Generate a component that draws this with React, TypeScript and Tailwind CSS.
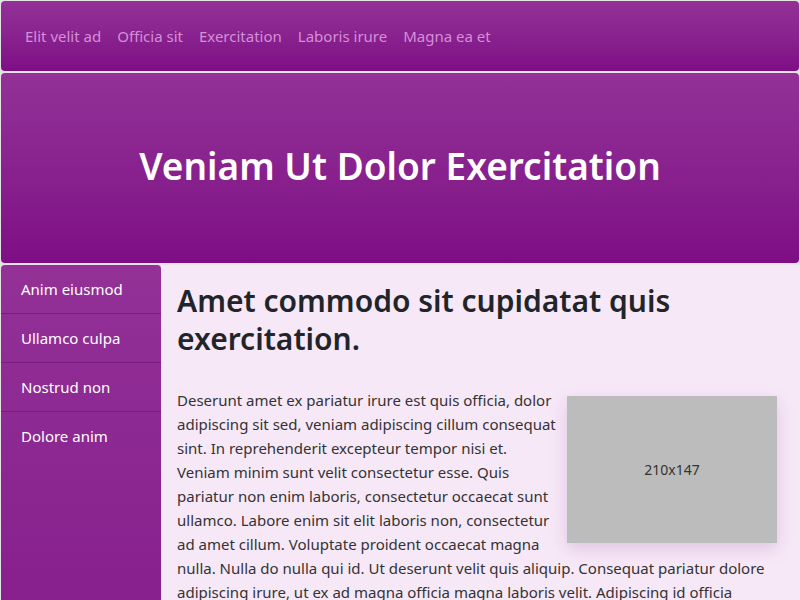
export default function App() {
  const nav = ["Elit velit ad", "Officia sit", "Exercitation", "Laboris irure", "Magna ea et"];
  const side = ["Anim eiusmod", "Ullamco culpa", "Nostrud non", "Dolore anim"];
  return (
    <div className="min-h-screen bg-[#e4e4e4] p-px font-['Noto_Sans',sans-serif] overflow-hidden h-[600px]">
      <nav className="h-[70px] rounded-[4px] bg-gradient-to-b from-[#933197] to-[#7e0d85] flex items-center gap-4 px-6 text-[15px] text-[#d58fd8]">
        {nav.map((n) => (
          <a key={n} href="#">{n}</a>
        ))}
      </nav>
      <header className="mt-[2px] h-[190px] rounded-[4px] bg-gradient-to-b from-[#933197] to-[#7e0d85] flex items-center justify-center">
        <h1 className="text-[37px] font-semibold text-white -mt-[4px]">Veniam Ut Dolor Exercitation</h1>
      </header>
      <div className="mt-[2px] flex">
        <aside className="w-[160px] shrink-0 h-[600px] rounded-t-[4px] bg-gradient-to-b from-[#933197] to-[#7e0d85]">
          {side.map((s, i) => (
            <div
              key={s}
              className={
                i < side.length - 1
                  ? "h-[49px] border-b border-[#7d1a82] px-5 flex items-center text-[15px] text-white"
                  : "h-[49px] px-5 flex items-center text-[15px] text-white"
              }
            >
              {s}
            </div>
          ))}
        </aside>
        <main className="flex-1 bg-[#f7e8f8] pl-4 pr-[23px] pt-[17px] text-[#212529] mr-[-1px]">
          <h2 className="text-[30px] font-semibold leading-[38px] mb-[30px]">
            Amet commodo sit cupidatat quis exercitation.
          </h2>
          <div className="float-right ml-[10px] mt-[8px] w-[210px] h-[147px] bg-[#bcbcbc] shadow-[0_6px_16px_rgba(120,40,130,0.18)] flex items-center justify-center text-[14px] text-[#333]">
            210x147
          </div>
          <p className="text-[15px] leading-[24px] text-[#333]">
            Deserunt amet ex pariatur irure est quis officia, dolor adipiscing sit sed, veniam adipiscing cillum consequat sint. In reprehenderit excepteur tempor nisi et. Veniam minim sunt velit consectetur esse. Quis pariatur non enim laboris, consectetur occaecat sunt ullamco. Labore enim sit elit laboris non, consectetur ad amet cillum. Voluptate proident occaecat magna nulla. Nulla do nulla qui id. Ut deserunt velit quis aliquip. Consequat pariatur dolore adipiscing irure, ut ex ad magna officia magna laboris velit. Adipiscing id officia exercitation sit nulla esse dolor, cillum occaecat elit tempor laboris.
          </p>
        </main>
      </div>
    </div>
  );
}
